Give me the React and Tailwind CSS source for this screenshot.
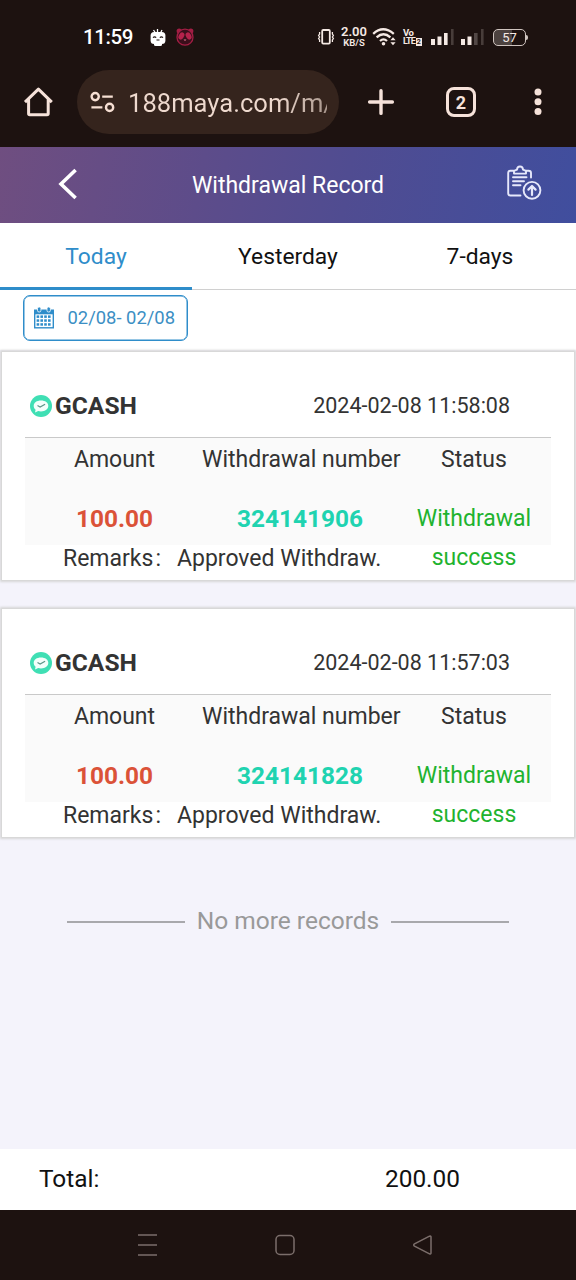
const TABS = ['Today', 'Yesterday', '7-days'];

const RECORDS = [
  { id: '324141906', amount: '100.00', time: '2024-02-08 11:58:08' },
  { id: '324141828', amount: '100.00', time: '2024-02-08 11:57:03' },
];

function Signal({ strong }) {
  return (
    <svg width="24" height="18" viewBox="0 0 24 18" fill="#f5e9e4">
      <rect x="0" y="11" width="4" height="6" />
      <rect x="6.5" y="8.5" width="4" height="8.5" />
      <rect x="13" y="5" width="3.6" height="12" opacity={strong ? 1 : 0.25} />
      <rect x="20" y="1" width="2.6" height="16" opacity="0.2" />
    </svg>
  );
}

function StatusBar() {
  return (
    <div className="flex h-[64px] items-center pt-[10px] pl-[83px] text-[#f5e9e4]">
      <span className="w-[66px] text-[20.5px] font-medium leading-6 tracking-[-0.4px] text-white">11:59</span>
      <svg width="18" height="18" viewBox="0 0 18 18" className="mt-[2px]">
        <path d="M4.5 1l2 3M13 1l-1.5 3M8.5 0v3" stroke="#fff" strokeWidth="1.3" />
        <rect x="1.6" y="3" width="14.8" height="12" rx="3.5" fill="#fff" />
        <rect x="5" y="13" width="8" height="4" rx="1.5" fill="#fff" />
        <path d="M4 8.6q1.6-1.4 3.2 0M10.8 8.6q1.6-1.4 3.2 0M7.5 11h3" stroke="#1d1210" strokeWidth="1.1" fill="none" />
      </svg>
      <svg width="20" height="20" viewBox="0 0 20 20" className="ml-[8px]">
        <circle cx="4.2" cy="4" r="2.6" fill="#a31e44" />
        <circle cx="15.8" cy="4" r="2.6" fill="#a31e44" />
        <circle cx="10" cy="10.2" r="8" fill="#3a0f1b" stroke="#a31e44" strokeWidth="1.3" />
        <ellipse cx="6.4" cy="9" rx="2.6" ry="3.8" fill="#b5224b" transform="rotate(30 6.4 9)" />
        <ellipse cx="13.6" cy="9" rx="2.6" ry="3.8" fill="#b5224b" transform="rotate(-30 13.6 9)" />
        <path d="M8.5 12.5h3L10 14z" fill="#e77b96" />
      </svg>
      <svg width="18" height="18" viewBox="0 0 18 18" fill="none" stroke="#f5e9e4" strokeWidth="1.8" className="ml-[122px]">
        <rect x="5.2" y="2" width="7.6" height="13.6" rx="1" />
        <path d="M2.6 4v2l-1 1.5 1 1.5-1 1.5 1 1.5v2M15.4 4v2l1 1.5-1 1.5 1 1.5-1 1.5v2" strokeWidth="1.3" />
      </svg>
      <div className="ml-[5px] flex w-[28px] flex-col items-center font-semibold">
        <span className="text-[13px] leading-[12px]">2.00</span>
        <span className="text-[9.5px] leading-[10px]">KB/S</span>
      </div>
      <svg width="26" height="20" viewBox="0 0 26 20" fill="none" stroke="#f5e9e4" strokeWidth="2.3" className="ml-[4px]">
        <path d="M1.2 6.8q9.8-9 20.6 0M4.6 10.4q6.9-6.2 13.8 0M8 14q3.5-3.2 7 0" />
        <circle cx="11.5" cy="16.8" r="1.8" fill="#f5e9e4" stroke="none" />
        <path d="M18.4 13.2l2.6-3 2.6 3zM18.4 15.2l2.6 3 2.6-3z" fill="#f5e9e4" stroke="none" />
      </svg>
      <div className="ml-[5px] flex w-[20px] flex-col font-bold">
        <span className="text-[9.5px] leading-[9px] tracking-[-0.5px]">Vo</span>
        <span className="flex items-center text-[9px] leading-[9px] tracking-[-0.9px]">
          LTE<span className="ml-[1px] h-[8px] w-[6px] bg-[#f5e9e4] text-center text-[7px] leading-[8px] tracking-normal text-[#1d1210]">2</span>
        </span>
      </div>
      <span className="ml-[8px]"><Signal strong /></span>
      <span className="ml-[6px]"><Signal /></span>
      <div className="ml-[8px] flex h-[17px] w-[33px] items-center justify-center rounded-[5px] border-[1.5px] border-[#cfc4bf] bg-[linear-gradient(90deg,#4c423f_57%,transparent_57%)] text-[13px] leading-none">
        57
      </div>
      <span className="h-[5px] w-[2px] rounded-r bg-[#cfc4bf]" />
    </div>
  );
}

function AddressBar() {
  return (
    <div className="flex h-[83px] items-start pt-[6px] pl-[22px]">
      <svg width="32" height="32" viewBox="0 0 32 32" fill="none" stroke="#f6e2da" strokeWidth="3" strokeLinejoin="round" className="mt-[16px]">
        <path d="M3 16.2L16.4 3.2 29.8 16.2M6.6 13.5V27.6q0 1.2 1.2 1.2H25q1.2 0 1.2-1.2V13.5" />
      </svg>
      <div className="ml-[23px] flex h-[64px] w-[262px] items-center rounded-full bg-[#35241d] pl-[13px]">
        <svg width="26" height="22" viewBox="0 0 26 22" fill="none" stroke="#f6dfd3" strokeWidth="2.4">
          <circle cx="5.2" cy="5.6" r="3.6" />
          <path d="M12.2 5.6h10.6M1.4 16.4h11" />
          <circle cx="19.6" cy="16.4" r="3.6" />
        </svg>
        <div className="ml-[12px] w-[199px] overflow-hidden bg-[linear-gradient(90deg,#eed9ce_75%,#a9978d)] bg-clip-text pt-[2px] text-[25.6px] whitespace-nowrap text-transparent">
          188maya.com/m/
        </div>
      </div>
      <svg width="28" height="28" viewBox="0 0 28 28" stroke="#f6e2da" strokeWidth="3.4" strokeLinecap="round" className="mt-[18px] ml-[28px]">
        <path d="M14 2.8v22.6M2.6 14h22.8" />
      </svg>
      <div className="mt-[17px] ml-[51px] flex size-[30px] items-center justify-center rounded-[8px] border-[3px] border-[#f6e2da] text-[18px] font-bold text-[#f6e2da]">
        2
      </div>
      <svg width="8" height="28" viewBox="0 0 8 28" fill="#f6e2da" className="mt-[18px] ml-[58px]">
        <circle cx="4" cy="4" r="3.5" />
        <circle cx="4" cy="13.8" r="3.5" />
        <circle cx="4" cy="23.6" r="3.5" />
      </svg>
    </div>
  );
}

function Header() {
  return (
    <header className="flex h-[76px] items-center bg-[linear-gradient(100deg,#6f4e80_0%,#5d4c8a_35%,#504c91_60%,#404e9e_100%)] pb-[2px] text-white">
      <div className="w-[144px] pl-[57px]">
        <svg width="22" height="32" viewBox="0 0 22 32" fill="none" stroke="#fff" strokeWidth="3.6">
          <path d="M18.6 2L4 16l14.6 14" />
        </svg>
      </div>
      <h1 className="w-[288px] pt-[4px] text-center text-[23px]">Withdrawal Record</h1>
      <svg width="38" height="38" viewBox="0 0 38 38" fill="none" stroke="#e6e8fb" strokeWidth="1.9" strokeLinecap="round" strokeLinejoin="round" className="mb-[2px] ml-[74px]">
        <path d="M14.5 31.5H4.5Q2.2 31.5 2.2 29.2V9Q2.2 6.7 4.5 6.7H7.5M20 6.7H22.5Q25 6.7 25 9V13.5" />
        <path d="M8 9.6V6.8L11 5.6Q11.2 2.5 14 2.5T17 5.6L20 6.8V9.6Z" />
        <path d="M7 13.2H20.5M7 17.2H18M7 21.2H14.5" />
        <circle cx="26" cy="26.3" r="8.4" />
        <path d="M26 31V22.5M22.4 25.6L26 22L29.6 25.6" strokeWidth="2.2" />
      </svg>
    </header>
  );
}

function CalendarIcon() {
  const cols = [3.6, 7.4, 11.2, 15];
  const rows = [9.4, 13.3, 17.2];
  return (
    <svg width="22" height="24" viewBox="0 0 22 24">
      <path d="M1 3.5h20V22.5H1z" fill="#2f8dca" />
      <rect x="2.4" y="8.3" width="17.2" height="12.8" fill="#fff" />
      <g fill="#2f8dca">
        {rows.map((y) => cols.map((x) => <rect key={`${x}-${y}`} x={x} y={y} width="2.6" height="2.5" />))}
      </g>
      <rect x="4.5" y="1" width="3.4" height="5" rx="1.5" fill="#2f8dca" stroke="#fff" strokeWidth="0.8" />
      <rect x="14" y="1" width="3.4" height="5" rx="1.5" fill="#2f8dca" stroke="#fff" strokeWidth="0.8" />
    </svg>
  );
}

function RecordCard({ record }) {
  return (
    <section className="mx-[2px] h-[228px] bg-white px-[23px] shadow-[0_0_2px_2px_#d6d6d6]">
      <div className="flex h-[86px] items-center border-b border-[#c9c9c9] pt-[23px] pl-[5px]">
        <svg width="22" height="22" viewBox="0 0 22 22">
          <circle cx="11" cy="11" r="11" fill="#3fdfb4" />
          <path d="M11 5.5c4.3 0 7.3 2.2 7.3 5.3s-3 5.7-7.3 5.7c-1 0-2-.1-2.8-.4L5 17.5l.6-2.7C4.4 13.7 3.7 12.4 3.7 10.9 3.7 7.7 6.7 5.5 11 5.5z" fill="#f3fffb" />
          <path d="M7.5 10.5l2.6 1.5 5-2.8" stroke="#5d9488" strokeWidth="1.2" fill="none" />
        </svg>
        <span className="ml-[3px] text-[24.6px] font-bold">GCASH</span>
        <span className="ml-auto pr-[41px] text-[21.5px]">{record.time}</span>
      </div>
      <div className="grid h-[107px] w-[526px] grid-cols-[179px_192px_155px] grid-rows-[42px_auto] bg-[#fafafa] text-center text-[23px]">
        <span className="leading-[44px]">Amount</span>
        <span className="-ml-[2px] leading-[44px] whitespace-nowrap">Withdrawal number</span>
        <span className="pl-[1px] leading-[44px]">Status</span>
        <strong className="pt-[19px] text-[24.4px] leading-[39px] text-[#db5238]">{record.amount}</strong>
        <strong className="pt-[19px] text-[24.4px] leading-[39px] text-[#20d3b0]">{record.id}</strong>
        <span className="pt-[19px] pr-[10px] pl-[11px] leading-[39px] text-[#1fb32f]">Withdrawal success</span>
      </div>
      <div className="flex pt-[1px] pl-[38px] text-[23px] leading-[25px]">
        <span className="w-[114px]">Remarks<span className="ml-[2px]">:</span></span>
        <span>Approved Withdraw.</span>
      </div>
    </section>
  );
}

export default function App() {
  return (
    <div className="flex h-[1280px] w-[576px] flex-col overflow-hidden bg-[#f4f3fb] font-[Roboto,sans-serif] text-[#333]">
      <div className="bg-[#1d1210]">
        <StatusBar />
        <AddressBar />
      </div>
      <Header />
      <nav className="grid h-[67px] grid-cols-3 bg-white text-center text-[22.8px] leading-[61px] text-[#111]">
        {TABS.map((tab, i) => (
          <span
            key={tab}
            className={i === 0 ? 'border-b-3 border-[#2f8dca] pt-[3px] text-[#2f8dca]' : 'border-b border-[#d0d0d0] pt-[3px]'}
          >
            {tab}
          </span>
        ))}
      </nav>
      <div className="h-[60px] bg-white pt-[5px] pl-[23px]">
        <button type="button" className="flex h-[46px] w-[165px] items-center rounded-[7px] border-[1.5px] border-[#2f8dca] pl-[9px] text-[18.4px] text-[#3c8fc4] shadow-[inset_0_0_0_0.5px_#2f8dca]">
          <CalendarIcon />
          <span className="ml-[12.5px] whitespace-nowrap">02/08- 02/08</span>
        </button>
      </div>
      <main className="flex flex-1 flex-col gap-[29px] pt-[2px]">
        {RECORDS.map((record) => (
          <RecordCard key={record.id} record={record} />
        ))}
        <div className="mt-[39px] flex items-center gap-[12px] px-[67px] text-[24.5px] leading-[32px] text-[#999]">
          <span className="mt-[2px] h-[2px] flex-1 bg-[#a8a8ac]" />
          No more records
          <span className="mt-[2px] h-[2px] flex-1 bg-[#a8a8ac]" />
        </div>
      </main>
      <footer className="flex h-[61px] items-center bg-white pl-[39px] text-[24.4px] text-[#111]">
        <span className="w-[346px]">Total:</span>
        <span>200.00</span>
      </footer>
      <div className="flex h-[70px] items-center bg-[#1d1210] pl-[137px]">
        <svg width="300" height="24" viewBox="0 0 300 24" fill="none" stroke="#7b6e6b" strokeWidth="1.5">
          <path d="M1 2h19M1 12h19M1 22h19" />
          <rect x="139" y="2.5" width="18" height="19" rx="4" />
          <path d="M294 4v16q0 1.5-1.5.8l-15-7.6q-1.6-1.2 0-2.4l15-7.6Q294 2.5 294 4z" />
        </svg>
      </div>
    </div>
  );
}
